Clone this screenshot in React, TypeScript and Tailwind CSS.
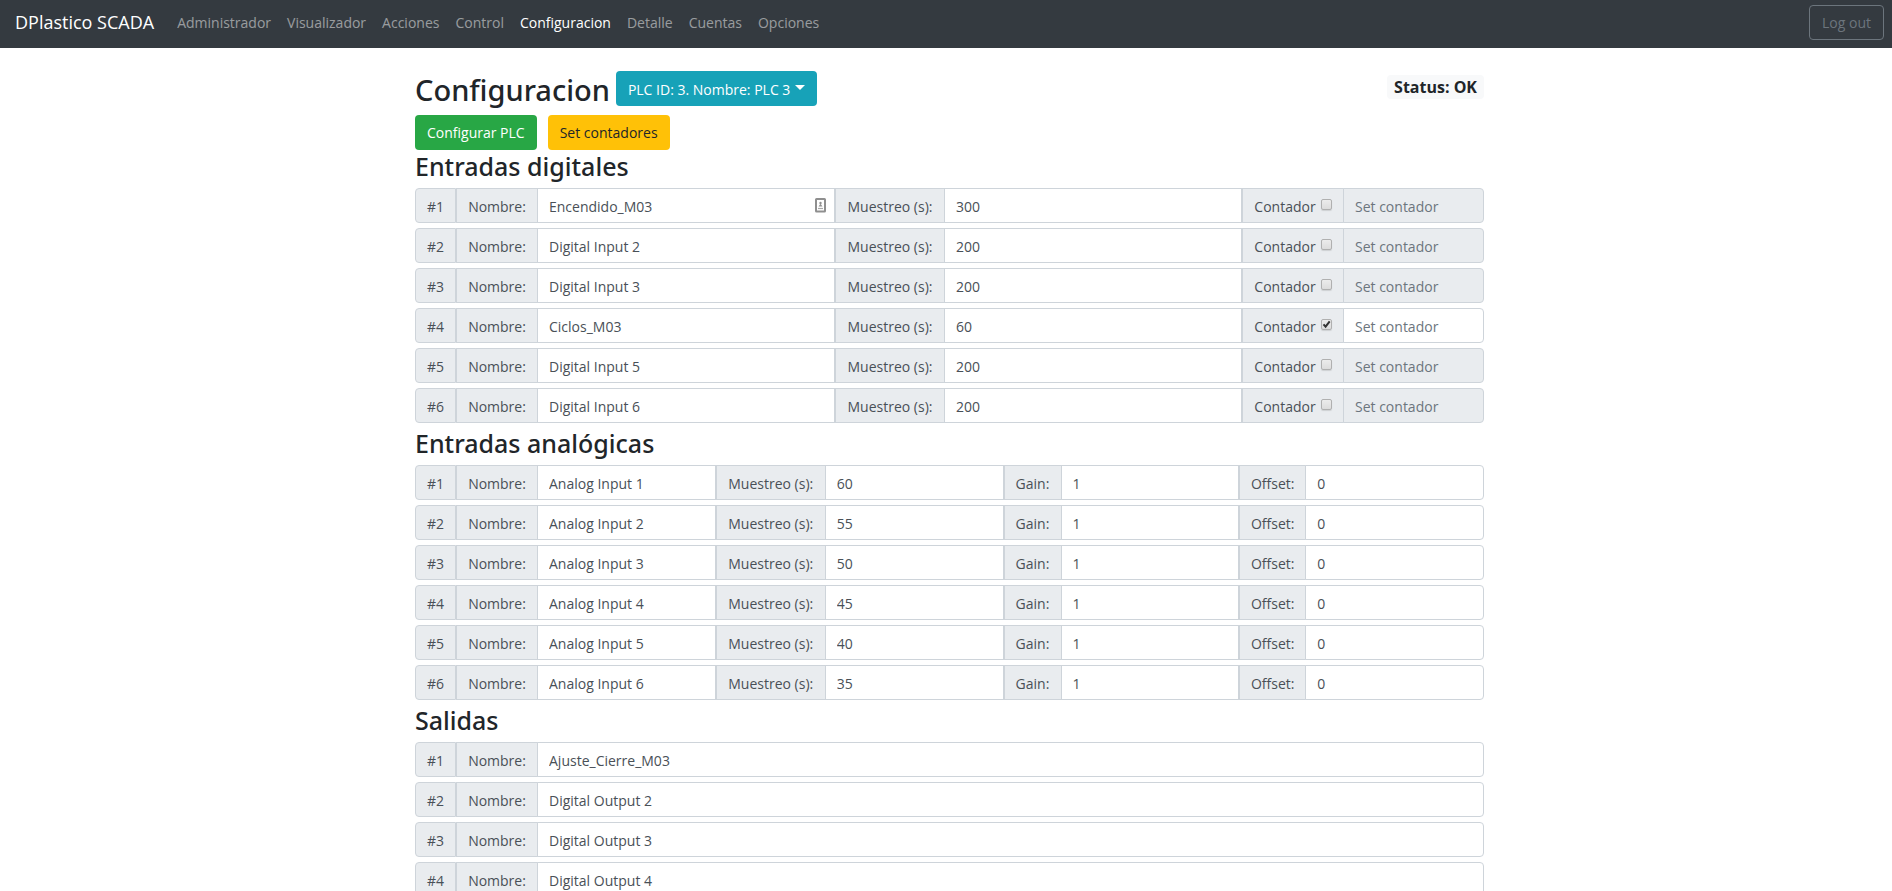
import { useState } from "react";
import type { InputHTMLAttributes, ReactNode } from "react";

const navItems = [
  "Administrador",
  "Visualizador",
  "Acciones",
  "Control",
  "Configuracion",
  "Detalle",
  "Cuentas",
  "Opciones",
];

const digitalInputs = [
  { name: "Encendido_M03", sampling: "300", counter: false },
  { name: "Digital Input 2", sampling: "200", counter: false },
  { name: "Digital Input 3", sampling: "200", counter: false },
  { name: "Ciclos_M03", sampling: "60", counter: true },
  { name: "Digital Input 5", sampling: "200", counter: false },
  { name: "Digital Input 6", sampling: "200", counter: false },
];

const analogInputs = [
  { name: "Analog Input 1", sampling: "60", gain: "1", offset: "0" },
  { name: "Analog Input 2", sampling: "55", gain: "1", offset: "0" },
  { name: "Analog Input 3", sampling: "50", gain: "1", offset: "0" },
  { name: "Analog Input 4", sampling: "45", gain: "1", offset: "0" },
  { name: "Analog Input 5", sampling: "40", gain: "1", offset: "0" },
  { name: "Analog Input 6", sampling: "35", gain: "1", offset: "0" },
];

const outputs = ["Ajuste_Cierre_M03", "Digital Output 2", "Digital Output 3", "Digital Output 4"];

const addon =
  "flex shrink-0 items-center justify-center border border-[#ced4da] bg-[#e9ecef] pt-[2px] whitespace-nowrap text-[#495057]";

function Field({ className = "", ...props }: InputHTMLAttributes<HTMLInputElement>) {
  return (
    <input
      type="text"
      className={`-ml-px w-0 min-w-0 border border-[#ced4da] bg-white px-[11px] pt-[2px] text-[#495057] outline-none placeholder:text-[#6c757d] placeholder:opacity-100 focus:border-[#80bdff] disabled:bg-[#e9ecef] ${className}`}
      {...props}
    />
  );
}

function Row({ index, children }: { index: number; children: ReactNode }) {
  return (
    <div className="flex h-[35px] items-stretch">
      <span className={`${addon} w-[41px] rounded-l-[4px]`}>#{index}</span>
      {children}
    </div>
  );
}

function Section({ title, children }: { title: string; children: ReactNode }) {
  return (
    <section>
      <h3 className="mb-[6px] font-['Noto_Sans','Open_Sans',sans-serif] text-[25px] leading-[31px] font-medium">{title}</h3>
      <div className="flex flex-col gap-[5px] pb-[5px]">{children}</div>
    </section>
  );
}

function DigitalRow({ index, item }: { index: number; item: (typeof digitalInputs)[number] }) {
  const [counter, setCounter] = useState(item.counter);
  const id = `digital-${index}`;
  return (
    <Row index={index}>
      <label htmlFor={`${id}-name`} className={`${addon} w-[82px]`}>
        Nombre:
      </label>
      <div className="relative flex flex-1">
        <Field id={`${id}-name`} defaultValue={item.name} className="flex-1" />
        {index === 1 && (
          <svg className="absolute top-[10px] right-[9px]" width="11" height="15" viewBox="0 0 11 15" fill="none" aria-hidden="true">
            <rect x="1" y="1" width="9" height="12.5" rx="0.5" stroke="#8f8f8f" strokeWidth="2" />
            <circle cx="5.5" cy="5" r="1.2" fill="#8f8f8f" />
            <path d="M3.5 8.5 5.5 5.8l2 2.7z" fill="#8f8f8f" />
            <path d="M3 10.5h5" stroke="#a8a8a8" strokeWidth="1.2" />
          </svg>
        )}
      </div>
      <label htmlFor={`${id}-sampling`} className={`${addon} w-[110px]`}>
        Muestreo (s):
      </label>
      <div className="flex flex-1">
        <Field id={`${id}-sampling`} defaultValue={item.sampling} className="flex-1" />
      </div>
      <label className={`${addon} w-[102px] gap-[5px]`}>
        Contador
        <span className="relative mb-[4px] flex">
          <input
            type="checkbox"
            checked={counter}
            onChange={(e) => setCounter(e.target.checked)}
            className="h-[11px] w-[11px] appearance-none rounded-[2px] border border-[#b0b0b0] bg-linear-to-b from-[#ececec] to-[#dcdcdc] shadow-[0_1px_1px_rgba(0,0,0,0.12)]"
          />
          {counter && (
            <svg className="pointer-events-none absolute inset-0" width="11" height="11" viewBox="0 0 11 11" fill="none" aria-hidden="true">
              <path d="M2.5 5.3 4.6 7.6 8.7 2.4" stroke="#333" strokeWidth="2" />
            </svg>
          )}
        </span>
      </label>
      <Field
        aria-label={`Set contador ${index}`}
        placeholder="Set contador"
        disabled={!counter}
        className="basis-[141px] rounded-r-[4px]"
      />
    </Row>
  );
}

export default function App() {
  return (
    <div className="bg-white font-['Open_Sans','Noto_Sans',sans-serif] text-[14px] leading-[22px] text-[#212529]">
      <header className="flex h-[48px] items-center bg-[#343a40] pr-[8px] pl-[15px]">
        <a href="#inicio" className="mr-[23px] pb-[4px] text-[18px] text-white">
          DPlastico SCADA
        </a>
        <nav className="flex flex-1 gap-[16px] pb-[2px]">
          {navItems.map((item) => (
            <a
              key={item}
              href={`#${item.toLowerCase()}`}
              className={item === "Configuracion" ? "text-white" : "text-white/50"}
            >
              {item}
            </a>
          ))}
        </nav>
        <button type="button" className="mb-[3px] h-[35px] rounded-[4px] border border-[#6c757d] px-[12px] text-[#6c757d]">
          Log out
        </button>
      </header>

      <main className="mx-auto max-w-[1076px] pt-[23px] pl-[7px]">
        <div className="flex items-start">
          <h2 className="mt-[1px] mr-[6px] font-['Noto_Sans','Open_Sans',sans-serif] text-[29px] leading-[36px] font-medium">Configuracion</h2>
          <button type="button" className="flex h-[35px] items-center gap-[5px] rounded-[4px] bg-[#17a2b8] px-[12px] pt-[2px] text-white">
            PLC ID: 3. Nombre: PLC 3
            <span className="mb-[4px] border-x-[5px] border-t-[5px] border-x-transparent border-t-white" />
          </button>
          <span className="mt-[4px] ml-auto rounded-[4px] bg-[#f8f9fa] px-[7px] text-[16px] leading-[24px] font-bold">
            Status: OK
          </span>
        </div>
        <div className="mt-[7px] mb-px flex gap-[11px]">
          <button type="button" className="h-[35px] rounded-[4px] bg-[#28a745] px-[12px] text-white">
            Configurar PLC
          </button>
          <button type="button" className="h-[35px] rounded-[4px] bg-[#ffc107] px-[12px]">
            Set contadores
          </button>
        </div>

        <Section title="Entradas digitales">
          {digitalInputs.map((item, i) => (
            <DigitalRow key={item.name} index={i + 1} item={item} />
          ))}
        </Section>

        <Section title="Entradas analógicas">
          {analogInputs.map((item, i) => {
            const id = `analog-${i + 1}`;
            return (
              <Row key={item.name} index={i + 1}>
                <label htmlFor={`${id}-name`} className={`${addon} w-[82px]`}>
                  Nombre:
                </label>
                <Field id={`${id}-name`} defaultValue={item.name} className="flex-1" />
                <label htmlFor={`${id}-sampling`} className={`${addon} w-[110px]`}>
                  Muestreo (s):
                </label>
                <Field id={`${id}-sampling`} defaultValue={item.sampling} className="flex-1" />
                <label htmlFor={`${id}-gain`} className={`${addon} w-[58px]`}>
                  Gain:
                </label>
                <Field id={`${id}-gain`} defaultValue={item.gain} className="flex-1" />
                <label htmlFor={`${id}-offset`} className={`${addon} w-[67px]`}>
                  Offset:
                </label>
                <Field id={`${id}-offset`} defaultValue={item.offset} className="flex-1 rounded-r-[4px]" />
              </Row>
            );
          })}
        </Section>

        <Section title="Salidas">
          {outputs.map((name, i) => (
            <Row key={name} index={i + 1}>
              <label htmlFor={`output-${i + 1}-name`} className={`${addon} w-[82px]`}>
                Nombre:
              </label>
              <Field id={`output-${i + 1}-name`} defaultValue={name} className="flex-1 rounded-r-[4px]" />
            </Row>
          ))}
        </Section>
      </main>
    </div>
  );
}
